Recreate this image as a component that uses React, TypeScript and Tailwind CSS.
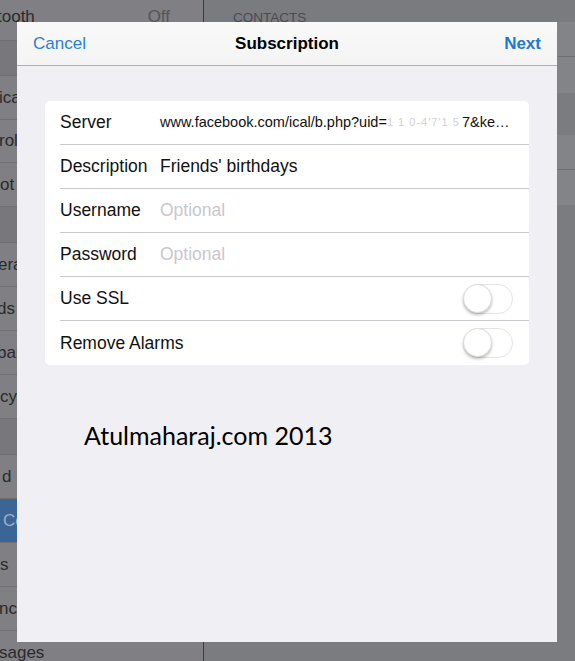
import React from "react";

const font = { fontFamily: '"Liberation Sans", Arial, sans-serif' };

function SideRow({ text, ml = 0, h = "h-[44px]", selected = false }: { text: string; ml?: number; h?: string; selected?: boolean }) {
  return (
    <div
      className={`${h} shrink-0 flex items-center border-b border-[#6f6f73] ${selected ? "bg-[#3b6595]" : "bg-[#808084]"}`}
    >
      <span
        className={`text-[17px] leading-[20px] whitespace-nowrap ${selected ? "text-[#9fb0c8]" : "text-[#2a2a2c]"}`}
        style={{ marginLeft: ml }}
      >
        {text}
      </span>
    </div>
  );
}

function Gap({ h }: { h: string }) {
  return <div className={`${h} shrink-0 bg-[#78787c] border-b border-[#6f6f73]`} />;
}

function Toggle() {
  return (
    <div className="w-[50px] h-[30px] rounded-full border-[1.5px] border-[#e3e3e6] bg-white relative">
      <div className="absolute left-[-1px] top-[-1px] w-[29px] h-[29px] rounded-full bg-white border border-[#dcdcdc] shadow-[0_2px_3px_rgba(0,0,0,0.25)]" />
    </div>
  );
}

function Row({ label, children, last = false }: { label: string; children?: React.ReactNode; last?: boolean }) {
  return (
    <div className="h-[44px] pl-[15px] flex">
      <div className={`flex-1 flex items-center ${last ? "" : "border-b border-[#c8c7cc]"}`}>
        <span className="w-[100px] shrink-0 whitespace-nowrap text-[17.5px] text-[#111]">{label}</span>
        <div className="flex-1 flex items-center min-w-0">{children}</div>
      </div>
    </div>
  );
}

export default function App() {
  return (
    <div className="w-[575px] h-[661px] relative overflow-hidden flex bg-[#7b7c80]" style={font}>
      {/* Sidebar */}
      <div className="w-[204px] shrink-0 border-r border-[#3d3d40] flex flex-col">
        <div className="h-[41px] shrink-0 flex items-start pt-[7px] bg-[#808084] border-b border-[#6f6f73]">
          <span className="text-[17px] leading-[20px] text-[#2a2a2c] ml-[-3px]">tooth</span>
          <span className="ml-auto mr-[33px] text-[17px] leading-[20px] text-[#555558]">Off</span>
        </div>
        <Gap h="h-[35px]" />
        <SideRow text="ica" ml={-1} />
        <SideRow text="rol" ml={-1} h="h-[43px]" />
        <SideRow text="ot" ml={0} />
        <Gap h="h-[36px]" />
        <SideRow text="era" ml={-2} />
        <SideRow text="ds" ml={-3} />
        <SideRow text="bap" ml={-3} />
        <SideRow text="cy" ml={0} />
        <Gap h="h-[36px]" />
        <SideRow text="d" ml={2} />
        <SideRow text="Co" ml={3} selected />
        <SideRow text="s" ml={0} />
        <SideRow text="nc" ml={-1} />
        <SideRow text="sages" ml={-1} />
      </div>

      {/* Right pane */}
      <div className="flex-1 flex flex-col">
        <div className="h-[22px] bg-[#7a7b7f] pl-[29px] pt-[5px]">
          <span className="text-[13.5px] leading-[16px] text-[#4b4b50]">CONTACTS</span>
        </div>
        <div className="h-[35px] bg-[#838488] border-b border-[#707074]" />
        <div className="h-[36px] bg-[#838488]" />
        <div className="h-[42px] bg-[#7b7c80]" />
        <div className="h-[35px] bg-[#838488] border-b border-[#707074]" />
        <div className="h-[35px] bg-[#838488]" />
        <div className="flex-1 bg-[#7b7c80]" />
      </div>

      {/* Modal */}
      <div className="absolute left-[17px] top-[22px] w-[540px] h-[620px] bg-[#efeff4] flex flex-col">
        <div className="h-[44px] bg-gradient-to-b from-[#f9f9f9] to-[#f4f4f5] border-b border-[#b0b0b3] flex items-center px-[16px] relative">
          <span className="text-[17px] text-[#2a7fd5]">Cancel</span>
          <span className="absolute left-0 right-0 text-center text-[17px] font-bold text-black pointer-events-none">Subscription</span>
          <span className="ml-auto text-[17px] font-bold text-[#1f78d4]">Next</span>
        </div>

        <div className="px-[28px] pt-[35px]">
          <div className="bg-white rounded-[5px] overflow-hidden">
            <Row label="Server">
              <span className="text-[14.5px] text-[#111] whitespace-nowrap flex items-center">
                <span>www.facebook.com/ical/b.php?uid=</span>
                <span className="inline-block w-[75px] text-[11px] text-[#d2d2d6] tracking-[1px]">1 1 0-4'7'1 5</span>
                <span>7&amp;ke…</span>
              </span>
            </Row>
            <Row label="Description">
              <span className="text-[17.5px] text-[#111]">Friends' birthdays</span>
            </Row>
            <Row label="Username">
              <span className="text-[17.5px] text-[#c7c7cd]">Optional</span>
            </Row>
            <Row label="Password">
              <span className="text-[17.5px] text-[#c7c7cd]">Optional</span>
            </Row>
            <Row label="Use SSL">
              <div className="ml-auto mr-[16px]">
                <Toggle />
              </div>
            </Row>
            <Row label="Remove Alarms" last>
              <div className="ml-auto mr-[16px]">
                <Toggle />
              </div>
            </Row>
          </div>
        </div>

        <div className="pl-[67px] mt-[55px]">
          <span className="text-[25px] leading-[30px] text-black" style={{ fontFamily: 'Lato, "Open Sans", sans-serif' }}>
            Atulmaharaj.com 2013
          </span>
        </div>
      </div>
    </div>
  );
}
